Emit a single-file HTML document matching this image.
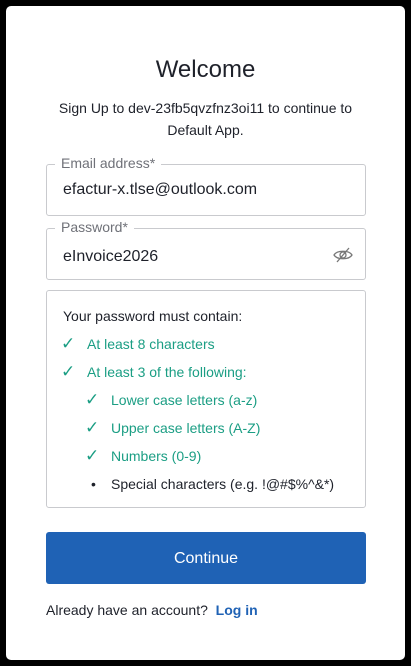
<!DOCTYPE html>
<html><head><style>
body{margin:0;width:411px;height:666px;background:#000;font-family:"Liberation Sans",sans-serif;overflow:hidden}
.card{position:absolute;left:6px;top:6px;width:399px;height:654px;background:#fff;border-radius:5px}
.abs{position:absolute}
h1{position:absolute;top:50px;left:0;width:100%;text-align:center;font-weight:400;font-size:24px;color:#1e212a;margin:0}
.sub{top:91px;left:0;width:100%;text-align:center;font-size:14px;line-height:22px;color:#1e212a}
.field{position:absolute;left:40px;width:318px;height:50px;border:1px solid #c9cace;border-radius:3px}
.field .lab{position:absolute;top:-10px;left:8px;background:#fff;padding:0 6px;font-size:14px;color:#6f7178}
.field .val{position:absolute;left:16px;top:16px;font-size:16px;color:#1e212a}
.box{position:absolute;left:40px;top:284px;width:318px;height:216px;border:1px solid #c9cace;border-radius:3px;font-size:14px}
.row{position:absolute;color:#1b9e84}
.ck{position:absolute;font-size:17px;color:#1b9e84}
.btn{position:absolute;left:40px;top:526px;width:320px;height:52px;background:#1f62b5;border-radius:3px;color:#fff;font-size:16px;text-align:center;line-height:54px}
</style></head><body>
<div class="card">
<h1>Welcome</h1>
<div class="abs sub">Sign Up to dev-23fb5qvzfnz3oi11 to continue to<br>Default App.</div>
<div class="field" style="top:158px"><span class="lab">Email address*</span><span class="val">efactur-x.tlse@outlook.com</span></div>
<div class="field" style="top:222px"><span class="lab">Password*</span><span class="val" style="top:19px">eInvoice2026</span>
<svg class="abs" style="left:286px;top:18px" width="20" height="16" viewBox="0 0 20 16" fill="none" stroke="#777" stroke-width="1.3"><path d="M1 8C4 3 16 3 19 8C16 13 4 13 1 8Z"/><circle cx="10" cy="8" r="3"/><path d="M4 15L16 1"/></svg></div>
<div class="box">
<div class="abs" style="left:16px;top:17px;color:#1e212a">Your password must contain:</div>
<span class="ck" style="left:14px;top:43px">✓</span><div class="row" style="left:40px;top:45px">At least 8 characters</div>
<span class="ck" style="left:14px;top:71px">✓</span><div class="row" style="left:40px;top:73px">At least 3 of the following:</div>
<span class="ck" style="left:38px;top:99px">✓</span><div class="row" style="left:64px;top:101px">Lower case letters (a-z)</div>
<span class="ck" style="left:38px;top:127px">✓</span><div class="row" style="left:64px;top:129px">Upper case letters (A-Z)</div>
<span class="ck" style="left:38px;top:155px">✓</span><div class="row" style="left:64px;top:157px">Numbers (0-9)</div>
<span class="abs" style="left:44px;top:185px;color:#1e212a">•</span><div class="abs" style="left:64px;top:185px;color:#1e212a">Special characters (e.g. !@#$%^&amp;*)</div>
</div>
<div class="btn">Continue</div>
<div class="abs" style="left:40px;top:596px;font-size:14px;color:#1e212a">Already have an account? &nbsp;<b style="color:#1f62b5">Log in</b></div>
</div>
</body></html>
